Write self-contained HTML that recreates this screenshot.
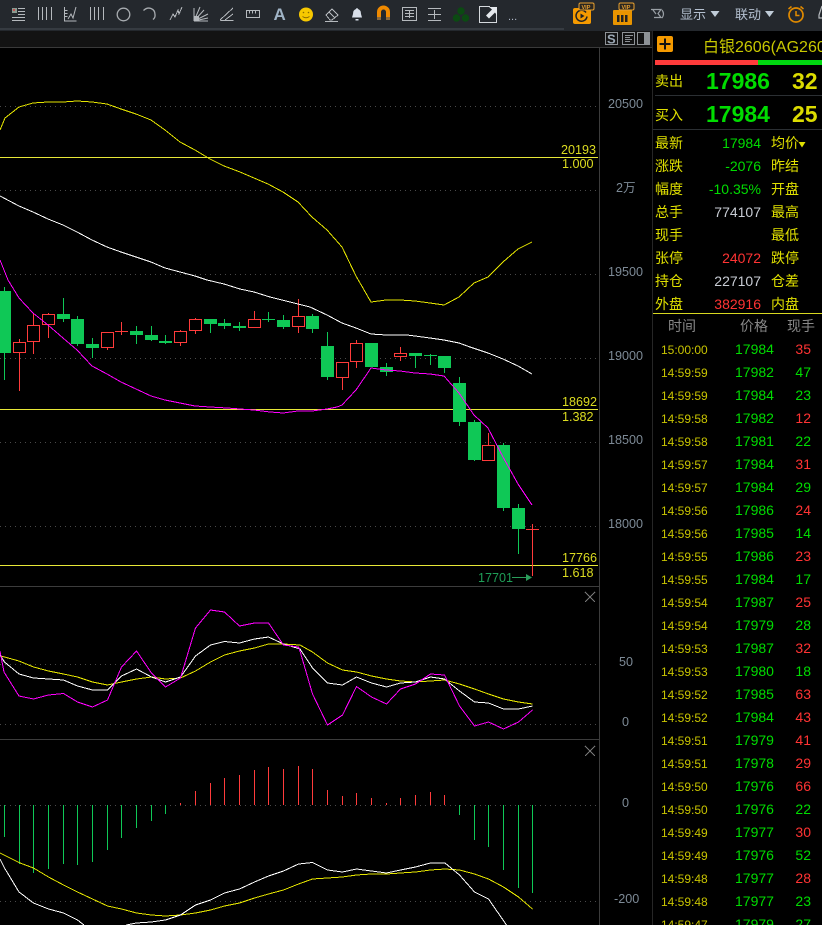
<!DOCTYPE html>
<html><head><meta charset="utf-8"><style>
html,body{margin:0;padding:0;background:#000;width:822px;height:925px;overflow:hidden}
svg{display:block;position:absolute;left:0;top:0}
text{font-family:"Liberation Sans","Noto Sans CJK SC",sans-serif}
.ax{font-size:12.6px;fill:#7d8a96}
.ly{font-size:12.6px;fill:#dcdc20}
.l{font-size:14px;fill:#e0e000}
.g{font-size:14px;fill:#00dc00}
.r{font-size:14px;fill:#ff3333}
.w{font-size:14px;fill:#c8ccd4}
.t{font-size:12px;fill:#c8c400}
.h{font-size:14px;fill:#888}
.b{font-size:23px;font-weight:bold}
</style></head><body>
<svg width="822" height="925" viewBox="0 0 822 925" xmlns="http://www.w3.org/2000/svg">
<rect width="822" height="925" fill="#000"/>
<!-- toolbar -->
<rect width="822" height="31" fill="#24282d"/>
<rect y="28" width="564" height="2" fill="#363b41"/>
<rect y="31" width="652" height="16" fill="#131313"/>
<rect y="47" width="652" height="1" fill="#3a3a3a"/>
<rect x="12" y="8" width="5" height="5" fill="#8a9a90"/>
<rect x="13" y="9" width="2" height="2" fill="#c05050"/>
<g fill="none" stroke="#b5b9bd" stroke-width="1" shape-rendering="crispEdges">
<path d="M18 8.500h7M18 11.500h7M18 14.500h7M12 17.500h13M12 20.500h13"/>
<path d="M38.500 7v13M42.500 7v13M46.500 7v13M51.500 7v13"/>
<path d="M64.500 7v14h12M64.500 10.500h3M64.500 13.500h3M64.500 16.500h3"/>
<path d="M90.500 7v13M94.500 7v13M98.500 7v13M103.500 7v13"/>
<path d="M170 20l3-6 2 3 3-7 1 4 3-7"/>
<path d="M220.500 20.500h13M220 20l13-12M225 20l8-6"/>
<rect x="246.500" y="10.500" width="13" height="7"/>
<path d="M249.500 10.500v3M252.500 10.500v3M255.500 10.500v3"/>
<path d="M325 21.500h13M326 15l6-6 6 6-6 5h-2zM329 12l6 6"/>
<rect x="402.500" y="7.500" width="14" height="13"/>
<path d="M405 10.500h9M405 13.500h9M405 16.500h9M409.500 10v8"/>
<path d="M428 8.500h13M428 20.500h13M428 14.500h13M434.500 10v9"/>
</g>
<circle cx="123.500" cy="14.500" r="6.300" fill="none" stroke="#a8acb0" stroke-width="1.300"/>
<path d="M143.500 10.500Q147 7 151 8.500T155 14.500Q155.500 17.500 153 19.500" fill="none" stroke="#a8acb0" stroke-width="1.300"/>
<path d="M76 7l-3 11-2-4-3 5" fill="none" stroke="#b5b9bd"/>
<path d="M194 21V8M194 21l6-14M194 21l10-11M194 21l14-7M194 21l14-3M194 21h14" fill="none" stroke="#b5b9bd"/>
<rect x="194" y="16" width="5" height="5" fill="#b5b9bd"/>
<text x="273.500" y="20" font-size="17" font-weight="bold" fill="#a0b4c6">A</text>
<circle cx="306" cy="14.500" r="7" fill="#f7c800"/>
<circle cx="303.500" cy="12.500" r=".8" fill="#8a6a00"/><circle cx="308.500" cy="12.500" r=".8" fill="#8a6a00"/>
<path d="M302.500 16.500q3.500 2.500 7 0" fill="none" stroke="#8a6a00"/>
<path d="M357 8a1.500 1.500 0 0 1 1 1q3 1 3 5l1 3.500h-10l1-3.500q0-4 3-5a1.500 1.500 0 0 1 1-1zM355.500 19h3v1.500h-3z" fill="#d9e0ea"/>
<path d="M379 18v-6a4.500 4.500 0 0 1 9 0v6" fill="none" stroke="#f08a00" stroke-width="4"/>
<rect x="377" y="17" width="4" height="3" fill="#8a6a40"/><rect x="386" y="17" width="4" height="3" fill="#8a6a40"/>
<circle cx="461" cy="11" r="3.700" fill="#0b4a12"/><circle cx="456.500" cy="18" r="3.700" fill="#0b4a12"/><circle cx="465.500" cy="18" r="3.700" fill="#0b4a12"/>
<path d="M490 6.500h-10.500v16h17v-9" fill="none" stroke="#d5d9dd"/>
<path d="M497 7h-8l3 2.500-6 6 3 3 6-6 2 3z" fill="#e4e8ec"/>
<text x="508" y="20" font-size="11" fill="#b0b8c8">...</text>
<!-- VIP -->
<rect x="573" y="8" width="18" height="16" rx="2" fill="#f59a00"/>
<path d="M586 12.500a5.500 5.500 0 1 0 1 4" fill="none" stroke="#222" stroke-width="1.500"/>
<path d="M580.500 13.500v5l4-2.500z" fill="#222"/>
<rect x="579" y="3" width="15" height="7" rx="1.500" fill="#2a2620" stroke="#e8a030"/>
<text x="581.500" y="9" font-size="5.500" font-weight="bold" fill="#e8a030">VIP</text>
<rect x="613" y="10" width="19" height="15" rx="1" fill="#e89400"/>
<path d="M617 15h2.500v7H617zM621 15h2.500v7H621zM625 15h2.500v7H625z" fill="#222"/>
<rect x="619" y="3" width="15" height="7" rx="1.500" fill="#2a2620" stroke="#e8a030"/>
<text x="621.500" y="9" font-size="5.500" font-weight="bold" fill="#e8a030">VIP</text>
<path d="M651 9.500h10l-3 4 3 4h-7M653 10l3 4M662 10q3 4 0 8" fill="none" stroke="#9aa0a6" stroke-width="1.200"/>
<text x="680" y="19" font-size="13" fill="#b4c0d0">显示</text>
<path d="M710.500 11h9l-4.500 6z" fill="#c0ccd8"/>
<text x="735" y="19" font-size="13" fill="#b4c0d0">联动</text>
<path d="M765 11h9l-4.500 6z" fill="#c0ccd8"/>
<circle cx="796" cy="15" r="7" fill="none" stroke="#e08a00" stroke-width="1.700"/>
<path d="M796 11v4.500h3.500M788.500 9l3-2.500M803.500 9l-3-2.500" fill="none" stroke="#e08a00" stroke-width="1.500"/>
<path d="M822 6l-3 9v3h3" fill="none" stroke="#b5b9bd" stroke-width="1.200"/>
<!-- strip icons -->
<g fill="none" stroke="#8e9296" shape-rendering="crispEdges">
<rect x="605.500" y="32.500" width="12" height="12"/><rect x="622.500" y="32.500" width="12" height="12"/><rect x="637.500" y="32.500" width="12" height="12"/>
<path d="M625 35.500h8M625 37.500h5M625 39.500h7M625 41.500h5"/>
</g>
<rect x="644" y="33" width="5" height="11" fill="#8e9296"/>
<text x="607" y="43.500" font-size="13" font-weight="bold" fill="#9aa6b2">S</text>
<!-- separators -->
<g shape-rendering="crispEdges">
<rect x="599" y="47" width="1" height="878" fill="#3c3c3c"/>
<rect x="652" y="31" width="1" height="894" fill="#262626"/>
<rect y="586" width="600" height="1" fill="#3c3c3c"/>
<rect y="739" width="600" height="1" fill="#3c3c3c"/>
</g>
<!-- dotted grid -->
<path d="M0 106.500H598M0 190.500H598M0 274.500H598M0 358.500H598M0 442.500H598M0 526.500H598M0 664.500H598M0 724.500H598M0 805.500H598M0 901.500H598" stroke="#4a4a4a" stroke-dasharray="1 4" fill="none" shape-rendering="crispEdges"/>
<!-- horizontal fib -->
<path d="M0 157.500H598M0 409.500H598M0 565.500H598" stroke="#e8e838" fill="none" shape-rendering="crispEdges"/>
<!-- wicks -->
<g shape-rendering="crispEdges" fill="none">
<path stroke="#0fc856" d="M4.500 287V380M63.500 298V322M77.500 316V346M92.500 338V358M136.500 326V344M151.500 326V341M165.500 335V344M210.500 319V333M224.500 319V329M239.500 322V331M268.500 312V322M283.500 315V329M312.500 314V333M327.500 332V380M386.500 363V376M415.500 353V368M430.500 354V365M444.500 356V373M459.500 377V426M474.500 420V461M503.500 443V511M518.500 504V554"/>
<path stroke="#ff3b3b" d="M19.500 339V391M33.500 313V354M48.500 313V338M107.500 332V350M121.500 322V335M180.500 330V346M195.500 318V334M254.500 311V327M298.500 299V333M342.500 362V390M356.500 340V368M400.500 347V361M488.500 433V446M532.500 524V576"/>
<path stroke="#ff3b3b" d="M115 331.500H128M526 529.500H539"/>
<path stroke="#0fc856" d="M262 319.500H275M424 355.500H437"/>
</g>
<!-- green bodies -->
<path shape-rendering="crispEdges" fill="#0fc856" d="M0 291H11V353H0zM57 314h13v5H57zM71 319h13v25H71zM86 344h13v4H86zM130 331h13v4h-13zM145 335h13v5h-13zM159 341h13v2h-13zM204 319h13v5h-13zM218 323h13v3h-13zM233 326h13v2h-13zM277 320h13v7h-13zM306 316h13v13h-13zM321 346h13v31h-13zM365 343h13v24h-13zM380 367h13v5h-13zM409 353h13v3h-13zM438 356h13v12h-13zM453 383h13v39h-13zM468 422h13v38h-13zM497 445h13v63h-13zM512 508h13v21h-13z"/>
<!-- red bodies -->
<g shape-rendering="crispEdges" fill="#000" stroke="#ff3b3b">
<rect x="13.500" y="342.500" width="12" height="10"/>
<rect x="27.500" y="325.500" width="12" height="16"/>
<rect x="42.500" y="314.500" width="12" height="10"/>
<rect x="101.500" y="332.500" width="12" height="15"/>
<rect x="174.500" y="331.500" width="12" height="11"/>
<rect x="189.500" y="319.500" width="12" height="11"/>
<rect x="248.500" y="319.500" width="12" height="8"/>
<rect x="292.500" y="316.500" width="12" height="10"/>
<rect x="336.500" y="362.500" width="12" height="15"/>
<rect x="350.500" y="343.500" width="12" height="18"/>
<rect x="394.500" y="353.500" width="12" height="3"/>
<rect x="482.500" y="445.500" width="12" height="15"/>
</g>
<!-- main lines -->
<g fill="none" shape-rendering="crispEdges">
<polyline stroke="#e6e600" points="0,130 5,118 19,107 33,103 48,102 63,102 77,101 92,102 107,104 121,109 136,114 151,120 165,130 180,142 195,150 210,159 224,166 240,172 254,178 268,184 283,192 298,202 312,217 327,230 342,247 356,276 371,302 386,300 400,300 415,301 430,303 444,305 459,297 474,283 488,277 503,262 518,249 532,242"/>
<polyline stroke="#ffffff" points="0,196 19,206 33,212 48,219 63,225 77,232 92,240 107,247 121,252 136,257 151,262 165,268 180,272 195,276 207,280 224,284 240,289 254,292 270,297 290,302 310,307 327,315 342,323 356,328 371,334 386,335 407,335 415,336 430,338 444,340 459,343 470,347 488,353 503,359 518,366 532,374"/>
<polyline stroke="#ff00ff" points="0,260 8,280 19,298 33,313 48,325 63,338 77,350 92,366 107,374 121,382 136,389 151,396 165,400 180,403 195,406 210,407 227,408 240,409 254,410 270,412 283,413 298,411 312,411 327,409 337,407 342,405 356,390 371,368 386,370 400,371 415,373 430,374 444,376 459,393 474,415 488,428 503,457 518,484 532,505"/>
<!-- pane 2 -->
<polyline stroke="#e6e600" points="0,656 4.500,657 19,661 33.500,667 48.500,671 63.500,674 77.500,677 92.500,682 107.500,685 121.500,682 136.500,679 151.500,677 165.500,679 180.500,678 195.500,671 210.500,662 224.500,655 239.500,651 254.500,648 268.500,644 283.500,644 300,645 312.500,652 327.500,663 342.500,670 356.500,672 371.500,676 386.500,679 400.500,681 415.500,682 430.500,681 444.500,680 459.500,684 474.500,689 488.500,694 503.500,699 518.500,702 532.500,704"/>
<polyline stroke="#ffffff" points="0,655 4.500,662 19,674 33.500,678 48.500,679 63.500,680 77.500,686 92.500,690 107.500,690 121.500,676 136.500,669 151.500,677 165.500,682 180.500,677 195.500,656 210.500,645 224.500,641.500 239.500,643 254.500,639 268.500,637 283.500,644 300,649 312.500,668 327.500,683 342.500,685 356.500,677 371.500,683 386.500,687 400.500,683 415.500,682 430.500,677 444.500,679 459.500,691 474.500,702 488.500,703 503.500,709 518.500,709 532.500,706"/>
<polyline stroke="#ff00ff" points="0,651 4,672 19,696 33.500,699 48.500,695 63.500,693.500 77.500,702 92.500,707 107.500,700 121.500,667 136.500,651 151.500,673 165.500,687 180.500,678 195.500,628 210.500,610 224.500,612 239.500,626 254.500,623 268.500,623 283.500,645 298.500,647 300,651 312.500,694 327.500,725 342.500,715 356.500,686.500 371.500,697 386.500,704 400.500,689 415.500,684 430.500,674 444.500,675 459.500,706 474.500,726 488.500,722 503.500,729 518.500,722 532.500,710"/>
<!-- pane 3 bars -->
<path stroke="#0fc856" d="M4.500 805V837M19.500 805V864M33.500 805V873M48.500 805V869M63.500 805V864M77.500 805V865M92.500 805V862M107.500 805V850M121.500 805V838M136.500 805V828M151.500 805V821M165.500 805V814M459.500 805V815M474.500 805V840M488.500 805V847M503.500 805V870M518.500 805V888M532.500 805V893"/>
<path stroke="#ff3b3b" d="M180.500 803V805M195.500 791V805M210.500 783V805M224.500 778V805M239.500 775V805M254.500 770V805M268.500 767V805M283.500 769V805M298.500 766V805M312.500 769V805M327.500 790V805M342.500 796V805M356.500 793V805M371.500 798V805M386.500 803V805M400.500 798V805M415.500 795V805M430.500 792V805M444.500 795V805"/>
<polyline stroke="#e6e600" points="0,853 20,863 33.500,868 48.500,877 63.500,885 77.500,892 92.500,899 107.500,906 121.500,909 136.500,913 151.500,915 165.500,916 180.500,915 195.500,913 210.500,910 224.500,906 239.500,903 254.500,898 268.500,894 283.500,890 298.500,884 312.500,879 327.500,878 342.500,877 356.500,875 371.500,874 386.500,874 400.500,873 415.500,872 430.500,870 445,869 459.500,870 474.500,874 488.500,879 503.500,887 518.500,897 532.500,909"/>
<polyline stroke="#ffffff" points="0,859 4.500,868 19,892 33.500,903 48.500,909 63.500,913 77.500,920 84,925"/>
<polyline stroke="#ffffff" points="126,925 136.500,923 151.500,922 165.500,920 180.500,915 195.500,905 210.500,900 224.500,893 239.500,889 254.500,882 268.500,876 283.500,871 298.500,864 312.500,862.500 327.500,870 342.500,872 356.500,869 371.500,871 386.500,873 400.500,870 415.500,867 430.500,863 445,863 459.500,875 474.500,892 488.500,899 506.500,925"/>
<path stroke="#777" d="M585 592l10 10M595 592l-10 10M585 746l10 10M595 746l-10 10"/>
<path stroke="#2a9d5a" d="M512 577.500H530"/>
</g>
<path d="M526 574l6 3.500-6 3.500z" fill="#2a9d5a"/>
<!-- axis labels -->
<text class="ax" x="608" y="108">20500</text>
<text class="ax" x="616" y="192">2万</text>
<text class="ax" x="608" y="276">19500</text>
<text class="ax" x="608" y="360">19000</text>
<text class="ax" x="608" y="444">18500</text>
<text class="ax" x="608" y="528">18000</text>
<text class="ax" x="619" y="666">50</text>
<text class="ax" x="622" y="726">0</text>
<text class="ax" x="622" y="807">0</text>
<text class="ax" x="614" y="903">-200</text>
<text class="ly" x="561" y="154">20193</text>
<text class="ly" x="562" y="168">1.000</text>
<text class="ly" x="562" y="406">18692</text>
<text class="ly" x="562" y="421">1.382</text>
<text class="ly" x="562" y="562">17766</text>
<text class="ly" x="562" y="577">1.618</text>
<text x="478" y="582" font-size="12.600" fill="#1f9e57">17701</text>
<!-- right panel -->
<rect x="657" y="36" width="16" height="16" rx="2" fill="#f59a00"/>
<path d="M659.500 44h11M665 38.500v11" stroke="#111" stroke-width="2" fill="none"/>
<text x="703" y="52" font-size="16" fill="#c8c800">白银2606(AG260</text>
<g shape-rendering="crispEdges">
<rect x="655" y="60" width="103" height="5" fill="#ff3b3b"/>
<rect x="758" y="60" width="64" height="5" fill="#00d810"/>
<rect x="655" y="95" width="167" height="1" fill="#2b2f33"/>
<rect x="653" y="129" width="169" height="1" fill="#2b2f33"/>
<rect x="653" y="313" width="169" height="1" fill="#d8d820"/>
</g>
<text class="l" x="655" y="86">卖出</text>
<text class="b" x="706" y="89" fill="#00dc00">17986</text>
<text class="b" x="792" y="89" fill="#dcdc00">32</text>
<text class="l" x="655" y="120">买入</text>
<text class="b" x="706" y="122" fill="#00dc00">17984</text>
<text class="b" x="792" y="122" fill="#dcdc00">25</text>
<text class="l" x="655" y="148">最新</text><text class="g" x="761" y="148" text-anchor="end">17984</text><text class="l" x="771" y="148">均价</text>
<path d="M798.500 142h7l-3.500 5.500z" fill="#e0e000"/>
<text class="l" x="655" y="171">涨跌</text><text class="g" x="761" y="171" text-anchor="end">-2076</text><text class="l" x="771" y="171">昨结</text>
<text class="l" x="655" y="194">幅度</text><text class="g" x="761" y="194" text-anchor="end">-10.35%</text><text class="l" x="771" y="194">开盘</text>
<text class="l" x="655" y="217">总手</text><text class="w" x="761" y="217" text-anchor="end">774107</text><text class="l" x="771" y="217">最高</text>
<text class="l" x="655" y="240">现手</text><text class="l" x="771" y="240">最低</text>
<text class="l" x="655" y="263">张停</text><text class="r" x="761" y="263" text-anchor="end">24072</text><text class="l" x="771" y="263">跌停</text>
<text class="l" x="655" y="286">持仓</text><text class="w" x="761" y="286" text-anchor="end">227107</text><text class="l" x="771" y="286">仓差</text>
<text class="l" x="655" y="309">外盘</text><text class="r" x="761" y="309" text-anchor="end">382916</text><text class="l" x="771" y="309">内盘</text>
<text class="h" x="668" y="331">时间</text><text class="h" x="740" y="331">价格</text><text class="h" x="787" y="331">现手</text>
<!-- ticks -->
<text class="t" x="661" y="354">15:00:00</text><text class="g" x="735" y="354">17984</text><text class="r" x="811" y="354" text-anchor="end">35</text>
<text class="t" x="661" y="377">14:59:59</text><text class="g" x="735" y="377">17982</text><text class="g" x="811" y="377" text-anchor="end">47</text>
<text class="t" x="661" y="400">14:59:59</text><text class="g" x="735" y="400">17984</text><text class="g" x="811" y="400" text-anchor="end">23</text>
<text class="t" x="661" y="423">14:59:58</text><text class="g" x="735" y="423">17982</text><text class="r" x="811" y="423" text-anchor="end">12</text>
<text class="t" x="661" y="446">14:59:58</text><text class="g" x="735" y="446">17981</text><text class="g" x="811" y="446" text-anchor="end">22</text>
<text class="t" x="661" y="469">14:59:57</text><text class="g" x="735" y="469">17984</text><text class="r" x="811" y="469" text-anchor="end">31</text>
<text class="t" x="661" y="492">14:59:57</text><text class="g" x="735" y="492">17984</text><text class="g" x="811" y="492" text-anchor="end">29</text>
<text class="t" x="661" y="515">14:59:56</text><text class="g" x="735" y="515">17986</text><text class="r" x="811" y="515" text-anchor="end">24</text>
<text class="t" x="661" y="538">14:59:56</text><text class="g" x="735" y="538">17985</text><text class="g" x="811" y="538" text-anchor="end">14</text>
<text class="t" x="661" y="561">14:59:55</text><text class="g" x="735" y="561">17986</text><text class="r" x="811" y="561" text-anchor="end">23</text>
<text class="t" x="661" y="584">14:59:55</text><text class="g" x="735" y="584">17984</text><text class="g" x="811" y="584" text-anchor="end">17</text>
<text class="t" x="661" y="607">14:59:54</text><text class="g" x="735" y="607">17987</text><text class="r" x="811" y="607" text-anchor="end">25</text>
<text class="t" x="661" y="630">14:59:54</text><text class="g" x="735" y="630">17979</text><text class="g" x="811" y="630" text-anchor="end">28</text>
<text class="t" x="661" y="653">14:59:53</text><text class="g" x="735" y="653">17987</text><text class="r" x="811" y="653" text-anchor="end">32</text>
<text class="t" x="661" y="676">14:59:53</text><text class="g" x="735" y="676">17980</text><text class="g" x="811" y="676" text-anchor="end">18</text>
<text class="t" x="661" y="699">14:59:52</text><text class="g" x="735" y="699">17985</text><text class="r" x="811" y="699" text-anchor="end">63</text>
<text class="t" x="661" y="722">14:59:52</text><text class="g" x="735" y="722">17984</text><text class="r" x="811" y="722" text-anchor="end">43</text>
<text class="t" x="661" y="745">14:59:51</text><text class="g" x="735" y="745">17979</text><text class="r" x="811" y="745" text-anchor="end">41</text>
<text class="t" x="661" y="768">14:59:51</text><text class="g" x="735" y="768">17978</text><text class="r" x="811" y="768" text-anchor="end">29</text>
<text class="t" x="661" y="791">14:59:50</text><text class="g" x="735" y="791">17976</text><text class="r" x="811" y="791" text-anchor="end">66</text>
<text class="t" x="661" y="814">14:59:50</text><text class="g" x="735" y="814">17976</text><text class="g" x="811" y="814" text-anchor="end">22</text>
<text class="t" x="661" y="837">14:59:49</text><text class="g" x="735" y="837">17977</text><text class="r" x="811" y="837" text-anchor="end">30</text>
<text class="t" x="661" y="860">14:59:49</text><text class="g" x="735" y="860">17976</text><text class="g" x="811" y="860" text-anchor="end">52</text>
<text class="t" x="661" y="883">14:59:48</text><text class="g" x="735" y="883">17977</text><text class="r" x="811" y="883" text-anchor="end">28</text>
<text class="t" x="661" y="906">14:59:48</text><text class="g" x="735" y="906">17977</text><text class="g" x="811" y="906" text-anchor="end">23</text>
<text class="t" x="661" y="929">14:59:47</text><text class="g" x="735" y="929">17979</text><text class="g" x="811" y="929" text-anchor="end">27</text>
</svg>
</body></html>
